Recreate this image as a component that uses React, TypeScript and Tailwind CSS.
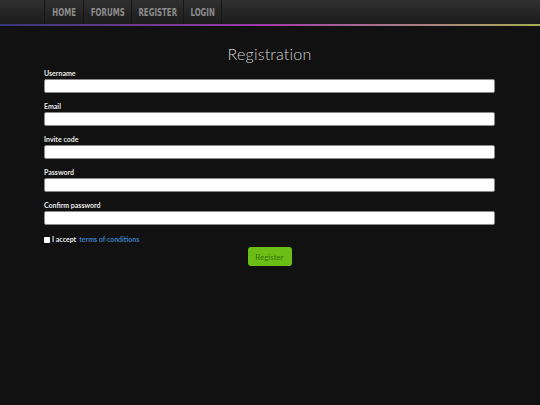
import React, { useState } from 'react'

const NAV = [
  { label: 'HOME', w: 'w-[39px]' },
  { label: 'FORUMS', w: 'w-[48px]' },
  { label: 'REGISTER', w: 'w-[52px]' },
  { label: 'LOGIN', w: 'w-[39px] border-r' },
]

const FIELDS = [
  { label: 'Username', type: 'text' },
  { label: 'Email', type: 'email' },
  { label: 'Invite code', type: 'text' },
  { label: 'Password', type: 'password' },
  { label: 'Confirm password', type: 'password' },
]

function Navbar(){
  return (
    <div>
      <div className="h-[24px] bg-gradient-to-b from-[#303030] to-[#1c1c1c] pl-[44px] flex">
        {NAV.map(item => (
          <a
            key={item.label}
            href="#"
            className={`h-full flex items-center justify-center border-l border-[#161616] text-[10px] font-bold text-[#8c8c8c] ${item.w}`}
            style={{ fontFamily: '"DejaVu Sans Condensed", "Liberation Sans Narrow", sans-serif' }}
          >
            <span className="inline-block scale-x-[0.78] whitespace-nowrap">{item.label}</span>
          </a>
        ))}
      </div>
      <div className="h-[2px] bg-gradient-to-r from-[#34347a] via-[#a23aa8] to-[#a8ac50]" />
    </div>
  )
}

export default function App(){
  const [accepted, setAccepted] = useState(false)

  return (
    <div className="w-[540px] h-[405px] bg-[#111111] overflow-hidden" style={{ fontFamily: 'Lato, "Open Sans", sans-serif' }}>
      <Navbar />

      <form className="px-[44px] pr-[45px] pt-[18px]" onSubmit={(e)=>e.preventDefault()}>
        <h1 className="text-center text-[16px] leading-[20px] font-light text-[#d0d0d0] tracking-[0.2px]">Registration</h1>

        <div className="mt-[5px] flex flex-col gap-[9px]">
          {FIELDS.map(f => (
            <div key={f.label}>
              <label className="block text-[7px] leading-[9px] font-bold text-[#e6e6e6] mb-[1px]">{f.label}</label>
              <input
                type={f.type}
                className="block w-full h-[14px] bg-white border border-[#8a8a8a] rounded-[2px] outline-none"
              />
            </div>
          ))}
        </div>

        <div className="mt-[10px] flex items-center gap-[1px] text-[7px] leading-[9px] font-bold">
          <input
            type="checkbox"
            checked={accepted}
            onChange={(e)=>setAccepted(e.target.checked)}
            className="appearance-none w-[6px] h-[6px] bg-white rounded-[1px] m-0"
          />
          <span className="text-[#e6e6e6] ml-[1px]">I accept</span>
          <a href="#" className="text-[#3b7fbf] ml-[2px]">terms of conditions</a>
        </div>

        <div className="flex justify-center mt-[3px]">
          <button
            type="submit"
            className="w-[44px] h-[19px] bg-[#6cbe16] rounded-[3px] text-[8px] text-[#3a750a] flex items-center justify-center"
          >
            Register
          </button>
        </div>
      </form>
    </div>
  )
}
